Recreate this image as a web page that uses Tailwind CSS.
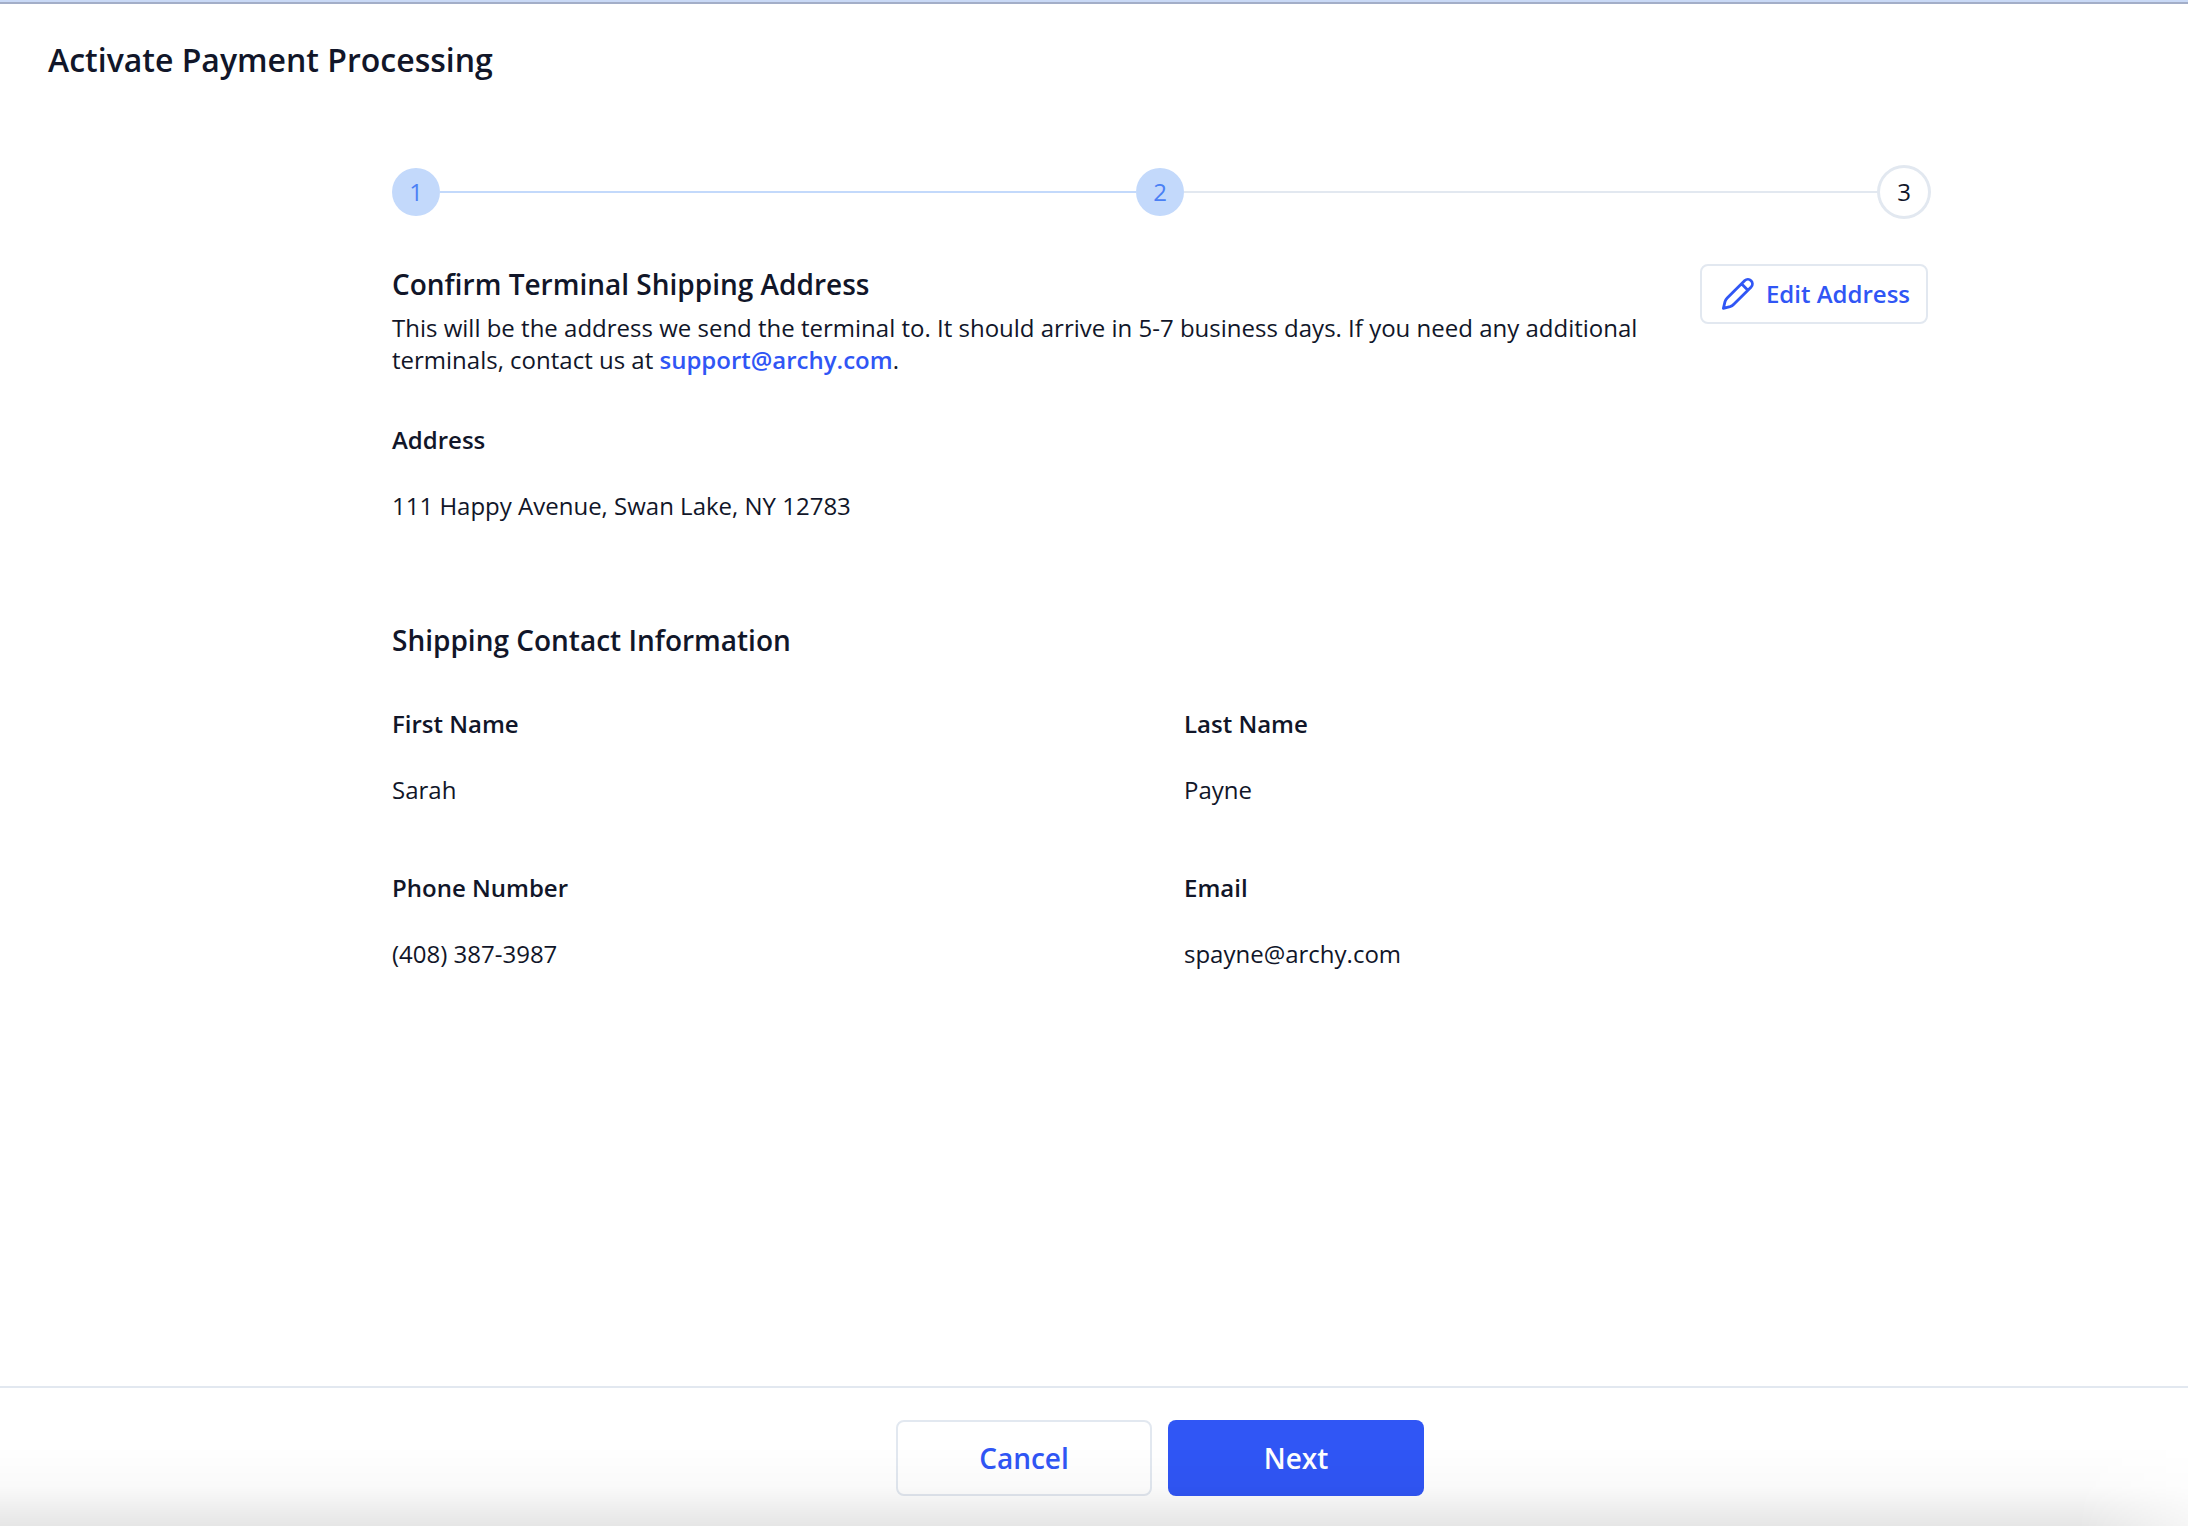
<!DOCTYPE html>
<html lang="en">
<head>
    <meta charset="UTF-8">
    <meta name="viewport" content="width=device-width, initial-scale=1.0">
    <title>Activate Payment Processing</title>
    <script src="https://cdn.jsdelivr.net/npm/@tailwindcss/browser@4"></script>
</head>
<body class="bg-white font-['Open_Sans',sans-serif] text-2xl/8 text-[#111629]">
    <div class="relative flex min-h-screen flex-col border-t-2 border-[#c9d9f6]">
        <header class="border-t-2 border-[#a3aec8] px-12 pt-9">
            <h1 class="text-[32px]/10 font-semibold">Activate Payment Processing</h1>
        </header>

        <main class="flex-1 pt-22 pl-[132px]">
            <div class="mx-auto max-w-[1536px]">
                <!-- Steps -->
                <ol class="flex items-center">
                    <li class="flex size-12 items-center justify-center rounded-full bg-[#c3d9fb] text-[#4a80f5]">1</li>
                    <li class="h-0.5 flex-1 bg-[#c3d9fb]" role="presentation"></li>
                    <li class="flex size-12 items-center justify-center rounded-full bg-[#c3d9fb] text-[#4a80f5]">2</li>
                    <li class="h-0.5 flex-1 bg-slate-200" role="presentation"></li>
                    <li class="flex size-12 items-center justify-center rounded-full bg-white ring-3 ring-slate-200">3</li>
                </ol>

                <!-- Shipping address -->
                <section class="pt-12">
                    <div class="flex items-start justify-between gap-12">
                        <div>
                            <h2 class="text-[28px]/10 font-semibold">Confirm Terminal Shipping Address</h2>
                            <p class="mt-2">This will be the address we send the terminal to. It should arrive in 5-7 business days. If you need any additional terminals, contact us at <a href="mailto:support@archy.com" class="font-semibold text-[#3056f5]">support@archy.com</a>.</p>
                        </div>
                        <button type="button" class="flex h-15 shrink-0 items-center gap-2 rounded-lg border-2 border-slate-200 px-4 font-semibold text-[#3056f5]">
                            <svg class="size-10" viewBox="0 0 40 40" fill="none" stroke="currentColor" stroke-width="2.8" stroke-linecap="round" stroke-linejoin="round" aria-hidden="true">
                                <path d="M26.8 6.5a4.53 4.53 0 0 1 6.4 6.4L15.8 30.3Q14.2 32.1 12 32.7L5.4 34.3 7 27.7Q7.6 25.7 9.2 24.1L26.8 6.5ZM23.5 9.8l6.4 6.4" />
                            </svg>
                            Edit Address
                        </button>
                    </div>
                    <dl class="mt-[47px] leading-[34px]">
                        <dt class="font-semibold">Address</dt>
                        <dd class="mt-8">111 Happy Avenue, Swan Lake, NY 12783</dd>
                    </dl>
                </section>

                <!-- Contact -->
                <section class="pt-[97px]">
                    <h2 class="text-[28px]/10 font-semibold">Shipping Contact Information</h2>
                    <dl class="mt-[47px] grid grid-cols-2 gap-x-12 gap-y-16 leading-[34px]">
                        <div>
                            <dt class="font-semibold">First Name</dt>
                            <dd class="mt-8">Sarah</dd>
                        </div>
                        <div>
                            <dt class="font-semibold">Last Name</dt>
                            <dd class="mt-8">Payne</dd>
                        </div>
                        <div>
                            <dt class="font-semibold">Phone Number</dt>
                            <dd class="mt-8">(408) 387-3987</dd>
                        </div>
                        <div>
                            <dt class="font-semibold">Email</dt>
                            <dd class="mt-8">spayne@archy.com</dd>
                        </div>
                    </dl>
                </section>
            </div>
        </main>

        <footer class="flex justify-center gap-4 border-t-2 border-slate-200 pt-8 pb-[30px] pl-[132px]">
            <button type="button" class="h-19 w-64 rounded-lg border-2 border-slate-200 bg-white text-[28px]/10 font-semibold text-[#3056f5]">Cancel</button>
            <button type="button" class="h-19 w-64 rounded-lg bg-[#3056f5] text-[28px]/10 font-semibold text-white">Next</button>
        </footer>

        <!-- Shade along the bottom edge -->
        <div class="pointer-events-none absolute inset-x-0 bottom-0 h-20 bg-linear-to-b from-black/0 via-black/2 to-black/10 mask-r-from-95% mask-r-to-103%"></div>
    </div>
</body>
</html>
